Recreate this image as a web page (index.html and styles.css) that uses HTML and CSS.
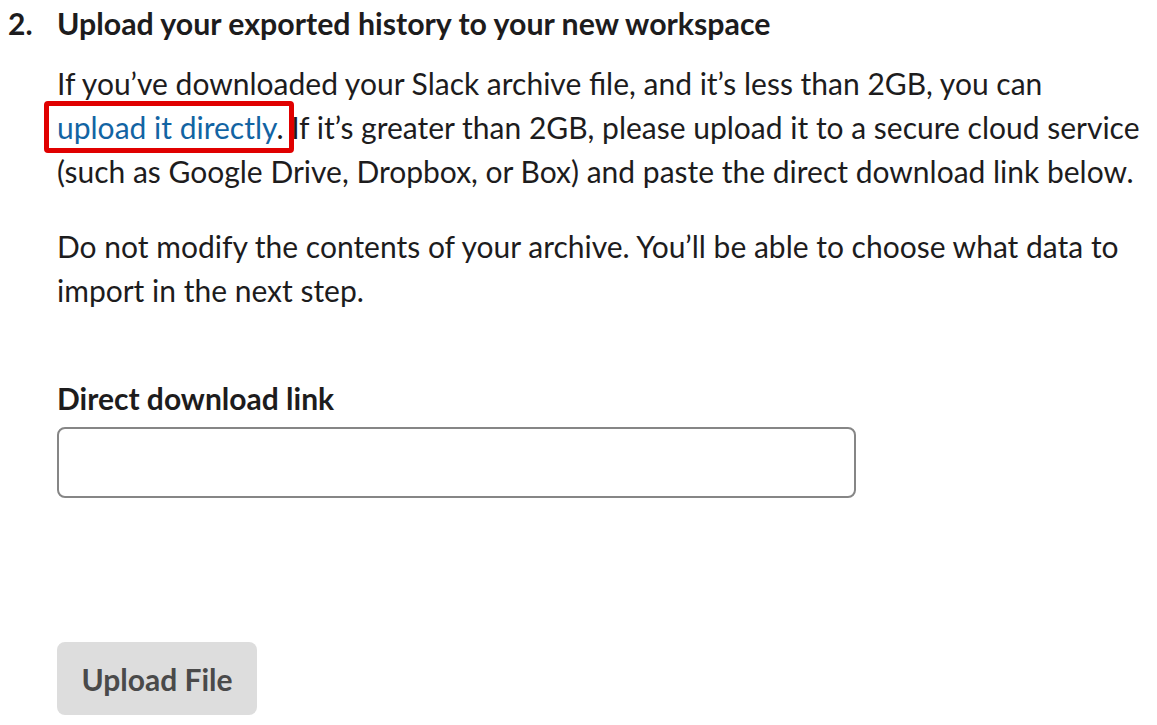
FILE: index.html
```html
<!DOCTYPE html>
<html lang="en">

<head>
  <meta charset="UTF-8">
  <meta name="viewport" content="width=device-width, initial-scale=1.0">
  <title>Import workspace</title>
  <link rel="stylesheet" href="styles.css">
</head>

<body>
  <div class="step">
    <div class="step-number">2.</div>
    <div class="step-body">
      <h2 class="step-title">Upload your exported history to your new workspace</h2>
      <p>If you’ve downloaded your Slack archive file, and it’s less than 2GB, you can
        <span class="highlight"><a href="#" class="link">upload it directly</a>.</span> If it’s greater than 2GB, please upload it to a secure cloud service
        (such as Google Drive, Dropbox, or Box) and paste the direct download link below.</p>
      <p>Do not modify the contents of your archive. You’ll be able to choose what data to
        import in the next step.</p>

      <label class="field-label" for="download-link">Direct download link</label>
      <input type="text" id="download-link" class="field-input">

      <button class="upload-btn" disabled>Upload File</button>
    </div>
  </div>
</body>

</html>
```

FILE: styles.css
```css
body {
  margin: 8px;
  font-family: Lato, "Noto Sans", sans-serif;
  color: #1d1c1d;
  background: white;
}

.step {
  display: flex;
}

.step-number {
  width: 49px;
  flex-shrink: 0;
  font-size: 30px;
  font-weight: 700;
  line-height: 30px;
}

.step-body {
  flex: 1;
}

.step-title {
  margin: 0;
  font-size: 30.3px;
  font-weight: 700;
  line-height: 30px;
}

p {
  margin: 31px 0 0 0;
  font-size: 30px;
  line-height: 44px;
}

.step-title + p {
  margin-top: 23px;
}

.link {
  color: #1264a3;
  text-decoration: none;
}

/* red annotation box around the link */
.highlight {
  position: relative;
  white-space: nowrap;
}

.highlight::after {
  content: "";
  position: absolute;
  top: -8px;
  bottom: -8px;
  left: -13px;
  right: -11px;
  border: 5px solid #e00000;
  border-radius: 4px;
  pointer-events: none;
}

.field-label {
  display: block;
  margin-top: 69px;
  font-size: 30px;
  font-weight: 700;
  line-height: 34px;
}

.field-input {
  display: block;
  box-sizing: border-box;
  width: 799px;
  height: 71px;
  margin-top: 12px;
  border: 2px solid #868686;
  border-radius: 8px;
  font-family: inherit;
  font-size: 30px;
  padding: 0 16px;
}

.upload-btn {
  display: block;
  margin-top: 144px;
  width: 200px;
  height: 73px;
  border: none;
  border-radius: 8px;
  background: #dddddd;
  color: #4a4a4a;
  font-family: inherit;
  font-size: 30px;
  font-weight: 700;
}
```
